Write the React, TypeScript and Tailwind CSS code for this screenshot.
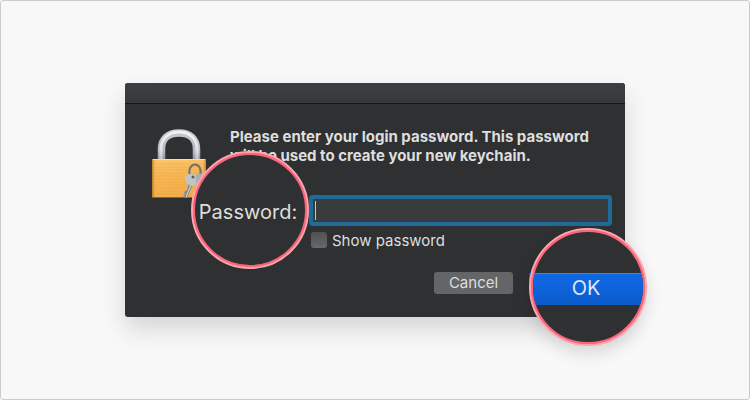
import type React from "react"

import { useState } from "react"

function PadlockIcon() {
  return (
    <svg width="60" height="75" viewBox="0 0 60 75" aria-hidden="true">
      <defs>
        <linearGradient id="shackle" x1="0" y1="0" x2="0" y2="1">
          <stop offset="0" stopColor="#c3c7cd" />
          <stop offset="0.6" stopColor="#b7bcc3" />
          <stop offset="1" stopColor="#8f959d" />
        </linearGradient>
        <linearGradient id="shine" x1="0" y1="0" x2="0" y2="1">
          <stop offset="0" stopColor="#ffffff" />
          <stop offset="0.7" stopColor="#e8ebef" />
          <stop offset="1" stopColor="#c5cad0" />
        </linearGradient>
        <linearGradient id="body" x1="0" y1="0" x2="0" y2="1">
          <stop offset="0" stopColor="#f9bf62" />
          <stop offset="0.5" stopColor="#f5ab40" />
          <stop offset="1" stopColor="#f0a038" />
        </linearGradient>
        <linearGradient id="edge" x1="0" y1="0" x2="1" y2="0">
          <stop offset="0" stopColor="#a86a1c" stopOpacity="0.8" />
          <stop offset="0.07" stopColor="#ffd283" stopOpacity="0.3" />
          <stop offset="0.93" stopColor="#ffd283" stopOpacity="0.2" />
          <stop offset="1" stopColor="#a86a1c" stopOpacity="0.7" />
        </linearGradient>
      </defs>
      {/* Shackle */}
      <path d="M10.500 34V22C10.500 12 17 6 28 6S45.500 12 45.500 22V34" fill="none" stroke="url(#shackle)" strokeWidth="7.500" />
      <path d="M10 34V22C10 12 17 5 28 5S46 12 46 22V34" fill="none" stroke="url(#shine)" strokeWidth="3" opacity="0.75" />
      {/* Body */}
      <rect x="1" y="32" width="54" height="39" rx="1" fill="url(#body)" />
      <path
        d="M2 37H54M2 40H54M2 43H54M2 46H54M2 49H54M2 52H54M2 55H54M2 58H54M2 61H54M2 64H54M2 67H54"
        stroke="#d98a27"
        strokeWidth="0.800"
        opacity="0.45"
      />
      <rect x="1" y="32" width="54" height="39" rx="1" fill="url(#edge)" />
      <path d="M2 32.500H54" stroke="#ffdd9c" />
      <path d="M1 70.500H55" stroke="#9b611c" />
      {/* Keys */}
      <path d="M39 50C37 42 40 37.500 44 37.500S51 42 49 49" fill="none" stroke="#77706a" strokeWidth="2" />
      <path d="M43 55L36 71L32 70L34 67L33 65L36 63L39 53Z" fill="#858b90" />
      <path d="M40 58L35 70" stroke="#d7dade" />
      <path d="M34 49C37 46 42 46 46 49C47 53 46 57 42 59C38 59 34 55 34 52Z" fill="#bfc4c8" />
      <path d="M45 48C49 45 54 47 57 51L55 57L49 59L45 57Z" fill="#a9afb4" />
      <path d="M45 58L42 71H46L48 58Z" fill="#8d9398" />
      <circle cx="42" cy="50" r="1.500" fill="#635d55" />
    </svg>
  )
}

export default function App() {
  const [password, setPassword] = useState("")
  const [showPassword, setShowPassword] = useState(false)

  const handleSubmit = (e: React.FormEvent) => {
    e.preventDefault()
  }

  return (
    <main className="flex min-h-screen items-center justify-center rounded-[3px] border border-[#cccccc] bg-[#f8f8f8] font-['Inter','Liberation_Sans',sans-serif]">
      <form
        onSubmit={handleSubmit}
        className="relative w-full max-w-[500px] rounded-[3px] bg-[#2f3031] text-[#dedede] shadow-[0_12px_24px_rgba(0,0,0,0.14)]"
      >
        {/* Title bar */}
        <div className="h-[21px] rounded-t-[3px] border-b border-[#161617] bg-linear-to-b from-[#3d3f40] to-[#373839]" />

        <div className="flex pt-[23px] pr-[13px] pb-[23px] pl-[26px]">
          <div className="w-[79px] shrink-0">
            <PadlockIcon />
          </div>

          <div className="flex-1">
            <h1 className="text-[15px] leading-[19px] font-bold">
              Please enter your login password. This password will be used to create your new keychain.
            </h1>

            {/* Password field */}
            <div className="mt-[30px] ml-[79px]">
              <div className="relative">
                <input
                  id="password"
                  type={showPassword ? "text" : "password"}
                  value={password}
                  onChange={(e) => setPassword(e.target.value)}
                  className="peer block h-[31px] w-full rounded-[4px] border-4 border-[#1e6b98] bg-[#3a3b3c] px-1 text-[15px] caret-[#dedede] outline-none"
                />
                {/* Resting caret, until the field takes the real one */}
                {password === "" && (
                  <span className="pointer-events-none absolute top-1.5 left-1.5 h-[19px] w-px bg-[#c4c4c4] peer-focus:hidden" />
                )}
              </div>
              <div className="mt-1.5 flex h-4 items-center gap-[5px] pl-0.5">
                <input
                  id="show-password"
                  type="checkbox"
                  checked={showPassword}
                  onChange={(e) => setShowPassword(e.target.checked)}
                  className="size-4 appearance-none rounded-[3px] bg-linear-to-b from-[#505152] to-[#68696a] checked:from-[#1b6fe6] checked:to-[#0d5bcc]"
                />
                <label htmlFor="show-password" className="text-[15px] leading-[19px]">
                  Show password
                </label>
              </div>
            </div>

            {/* Actions */}
            <div className="mt-6 flex justify-end gap-4">
              <button
                type="button"
                className="h-[22px] w-[79px] rounded-[3px] bg-[#646566] text-[15px] leading-[22px]"
              >
                Cancel
              </button>
              <span className="h-[22px] w-[83px] rounded-[3px] bg-[#1065df]" />
            </div>
          </div>
        </div>

        {/* Magnified label */}
        <div className="absolute top-[68px] left-[66px] size-[118px] rounded-full border-2 border-[#fda5b1] bg-[#f9667c]">
          <div className="flex size-full items-center justify-center rounded-full border-2 border-[#f9667c] bg-[#2f3031]">
            <label htmlFor="password" className="pt-1 pr-1 text-[20px] leading-6">
              Password:
            </label>
          </div>
        </div>

        {/* Magnified default button */}
        <div className="absolute -right-[22px] -bottom-[29px] size-[118px] rounded-full border-2 border-[#fda5b1] bg-[#f9667c] shadow-[0_8px_16px_rgba(0,0,0,0.12)]">
          <div className="flex size-full items-center overflow-hidden rounded-full border-2 border-[#f9667c] bg-[#2f3031]">
            <button
              type="submit"
              className="mt-1 flex h-8 w-full justify-center border-t border-[#3b82ed] bg-linear-to-b from-[#1069e5] to-[#0c5bcb] pr-1 pt-0.5 text-[20px] leading-6 text-[#dbe8fb]"
            >
              OK
            </button>
          </div>
        </div>
      </form>
    </main>
  )
}
